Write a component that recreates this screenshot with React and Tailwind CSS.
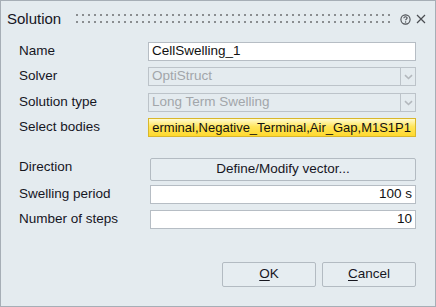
import React from "react";

const dots = Array.from({ length: 53 });

const Chevron = () => (
  <svg width="9" height="6" viewBox="0 0 9 6" fill="none">
    <path d="M1 1.2 L4.5 4.5 L8 1.2" stroke="#b3b8bd" strokeWidth="1.6" />
  </svg>
);

const Row = ({ label, className = "", children }) => (
  <div className={`flex items-center ${className}`}>
    <div className="w-[129px] shrink-0 text-[13.5px] text-[#16161f]">{label}</div>
    <div className="flex-1 min-w-0 h-full">{children}</div>
  </div>
);

const TextBox = ({ value, right }) => (
  <div
    className={`h-full flex items-center border border-[#b6bdc4] bg-white px-[3px] text-[13.5px] text-[#111] whitespace-nowrap ${
      right ? "justify-end" : ""
    }`}
  >
    {value}
  </div>
);

const Combo = ({ value }) => (
  <div className="h-full flex">
    <div className="flex-1 flex items-center border border-[#bcc3c9] px-[3px] text-[13.5px] text-[#a2a6aa]">
      {value}
    </div>
    <div className="w-[15px] flex items-center justify-center border border-l-0 border-[#bcc3c9]">
      <Chevron />
    </div>
  </div>
);

export default function App() {
  return (
    <div
      className="w-[436px] h-[307px] border border-[#a6aeb6] bg-[#e4ebef] flex flex-col"
      style={{ fontFamily: '"Liberation Sans", Arial, sans-serif' }}
    >
      <div className="h-[36px] flex items-center pl-[6px] pr-[9px]">
        <div className="text-[15px] text-[#16161f] w-[69px]">Solution</div>
        <div className="flex flex-col gap-[5px] mt-[-1px]">
          {[0, 1].map((r) => (
            <div key={r} className="flex gap-[4px]">
              {dots.map((_, i) => (
                <span key={i} className="w-[2px] h-[2px] bg-[#8a8d90]" />
              ))}
            </div>
          ))}
        </div>
        <div className="ml-auto flex items-center gap-[5px]">
          <svg width="11" height="11" viewBox="0 0 11 11" fill="none">
            <circle cx="5.5" cy="5.5" r="4.6" stroke="#4a4d52" strokeWidth="1.1" />
            <path
              d="M3.9 4.3 C3.9 3.3 4.6 2.8 5.5 2.8 C6.4 2.8 7.1 3.3 7.1 4.1 C7.1 5 5.6 5.2 5.6 6.3"
              stroke="#4a4d52"
              strokeWidth="1.1"
              fill="none"
            />
            <circle cx="5.6" cy="8" r="0.7" fill="#4a4d52" />
          </svg>
          <svg width="10" height="10" viewBox="0 0 10 10">
            <path d="M1 1 L9 9 M9 1 L1 9" stroke="#4a4d52" strokeWidth="1.2" />
          </svg>
        </div>
      </div>

      <div className="flex flex-col pl-[18px] pr-[19px]">
        <Row label="Name" className="h-[19px] mt-[5px]">
          <TextBox value="CellSwelling_1" />
        </Row>
        <Row label="Solver" className="h-[19px] mt-[6px]">
          <Combo value="OptiStruct" />
        </Row>
        <Row label="Solution type" className="h-[19px] mt-[7px]">
          <Combo value="Long Term Swelling" />
        </Row>
        <Row label="Select bodies" className="h-[19px] mt-[6px]">
          <div className="h-full flex items-center justify-end border border-[#d9b72a] bg-[linear-gradient(to_bottom,#fffbd0,#ffe55a_45%,#ffd92e)] pl-0 pr-[4px] text-[13px] text-[#111] whitespace-nowrap">
            <span>erminal,Negative_Terminal,Air_Gap,M1S1P1</span>
          </div>
        </Row>
        <Row label="Direction" className="h-[23px] mt-[19px]">
          <button className="ml-[2px] w-[calc(100%-2px)] h-full border border-[#b3bbc2] rounded-[2px] bg-[#e6edf1] text-[13.5px] text-[#16161f]">
            Define/Modify vector...
          </button>
        </Row>
        <Row label="Swelling period" className="h-[19px] mt-[6px]">
          <div className="ml-[2px] h-full">
            <TextBox value="100 s" right />
          </div>
        </Row>
        <Row label="Number of steps" className="h-[19px] mt-[6px]">
          <div className="ml-[2px] h-full">
            <TextBox value="10" right />
          </div>
        </Row>

        <div className="flex justify-end gap-[6px] mt-[33px]">
          <button className="w-[94px] h-[25px] border border-[#b3bbc2] rounded-[2px] bg-[#e6edf1] text-[13.5px] text-[#16161f]">
            <span className="underline underline-offset-2">O</span>K
          </button>
          <button className="w-[94px] h-[25px] border border-[#b3bbc2] rounded-[2px] bg-[#e6edf1] text-[13.5px] text-[#16161f]">
            <span className="underline underline-offset-2">C</span>ancel
          </button>
        </div>
      </div>
    </div>
  );
}
